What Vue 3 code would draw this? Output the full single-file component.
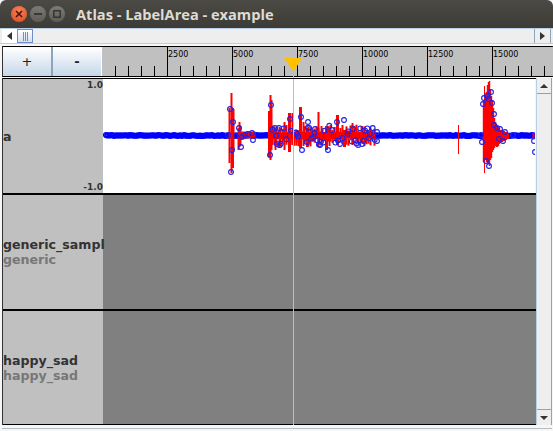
<template>
  <div class="window">
    <header class="titlebar">
      <div class="win-buttons">
        <span class="win-btn close">
          <svg width="8" height="8" viewBox="0 0 8 8"><path d="M1 1L7 7M7 1L1 7" stroke="#4a1206" stroke-width="1.6" /></svg>
        </span>
        <span class="win-btn">
          <svg width="8" height="8" viewBox="0 0 8 8"><path d="M0 4H8" stroke="#2e2d29" stroke-width="1.6" /></svg>
        </span>
        <span class="win-btn">
          <svg width="8" height="8" viewBox="0 0 8 8"><rect x="0.8" y="0.8" width="6.4" height="6.4" fill="none" stroke="#2e2d29" stroke-width="1.3" /></svg>
        </span>
      </div>
      <span class="title">Atlas - LabelArea - example</span>
    </header>

    <div class="hscroll">
      <button class="arrow-btn left"><span class="tri-left"></span></button>
      <div class="thumb"><i></i><i></i><i></i></div>
      <div class="htrack"></div>
      <button class="arrow-btn right"><span class="tri-right"></span></button>
    </div>

    <div class="toolbar">
      <button class="zoom-btn plus">+</button>
      <button class="zoom-btn minus">-</button>
      <div class="ruler">
        <div class="labels">
          <span v-for="m in marks" :key="m" class="mark">{{ m }}</span>
        </div>
        <svg class="ticks" width="449" height="29" viewBox="0 0 449 29">
          <line v-for="t in ticks" :key="t.x" :x1="t.x + 0.5" :x2="t.x + 0.5" :y1="t.major ? 0 : 19" y2="29" stroke="#000" />
        </svg>
        <svg class="marker" width="18" height="20" viewBox="0 0 18 20">
          <path d="M0 0H18L10 13V20H9V13Z" fill="#ffc000" />
        </svg>
      </div>
    </div>

    <div class="body">
      <div class="tracks">
        <section class="track">
          <div class="side">
            <span class="scale top">1.0</span>
            <span class="name">a</span>
            <span class="scale bottom">-1.0</span>
          </div>
          <svg class="wave" width="432" height="114" viewBox="103 79 432 114">
            <circle v-for="c in bandDots" :key="'b' + c.x" :cx="c.x" :cy="c.y" r="2.2" fill="none" stroke="#0000ff" stroke-width="1.8" />
            <line v-for="(s, i) in spikes" :key="'s' + i" :x1="s[0] + 0.5" :x2="s[0] + 0.5" :y1="s[1]" :y2="s[2]" stroke="#ff0000" :stroke-width="s[3] || 1.4" />
            <circle v-for="(c, i) in peaks" :key="'p' + i" :cx="c[0]" :cy="c[1]" r="2.4" fill="none" stroke="#2020e8" stroke-width="1.1" />
          </svg>
        </section>
        <section class="track">
          <div class="side">
            <span class="name">generic_sampl</span>
            <span class="kind">generic</span>
          </div>
          <div class="empty"></div>
        </section>
        <section class="track last">
          <div class="side">
            <span class="name">happy_sad</span>
            <span class="kind">happy_sad</span>
          </div>
          <div class="empty"></div>
        </section>
        <div class="playhead"></div>
      </div>

      <div class="vscroll">
        <button class="arrow-btn up"><span class="tri-up"></span></button>
        <div class="vtrack"></div>
        <button class="arrow-btn down"><span class="tri-down"></span></button>
      </div>
    </div>
    <div class="bottom-line"></div>
  </div>
</template>

<script setup>
const marks = [2500, 5000, 7500, 10000, 12500, 15000]

// ruler starts at x=102, 13px per minor tick, every 5th is a major one
const ticks = []
for (let i = 1; i * 13 < 449; i++) {
  ticks.push({ x: i * 13, major: i % 5 === 0 })
}

// small seeded random so the wave is the same on every load
let seed = 11
function rnd() {
  seed = (seed * 16807) % 2147483647
  return seed / 2147483647
}

const mid = 135.5

const bandDots = []
for (let x = 106; x < 535; x += 2) {
  bandDots.push({ x, y: mid + (rnd() - 0.5) * 0.8 })
}

// [x, top, bottom, width] read off the reference
const spikes = [
  [229, 108, 163, 2], [231, 93, 173, 2], [232, 108, 168, 3], [233, 109, 150, 2],
  [238, 128, 150, 2], [239, 122, 147, 2], [240, 126, 146, 2],
  [269, 111, 157, 3], [270, 95, 160, 2], [271, 100, 150, 2],
  [275, 128, 150, 2], [279, 127, 148, 2], [284, 122, 150, 2], [289, 113, 152, 3],
  [292, 113, 145, 2], [296, 130, 142, 2], [300, 107, 148, 3], [303, 122, 146, 2],
  [307, 128, 147, 3], [311, 128, 141, 2], [318, 112, 147, 2], [321, 126, 145, 2],
  [326, 126, 150, 3], [329, 130, 146, 2], [337, 115, 145, 3], [340, 128, 142, 2],
  [344, 130, 147, 3], [352, 123, 145, 2], [356, 129, 141, 2], [361, 126, 143, 2],
  [366, 130, 141, 2], [372, 131, 140, 2],
  [458, 125, 154, 1], [484, 86, 173, 1], [533, 133, 139, 2]
]

// big burst near 14500, fading out to the right
const burst = [
  [483, 100, 162], [485, 95, 160], [486, 92, 162], [487, 85, 163], [488, 82, 164],
  [489, 81, 166], [490, 90, 160], [491, 96, 158], [492, 100, 152], [493, 108, 150],
  [494, 118, 148], [495, 122, 146], [496, 124, 147], [497, 126, 147], [498, 128, 146],
  [499, 128, 144], [500, 130, 143], [501, 130, 142], [502, 130, 142], [503, 131, 141],
  [504, 131, 141], [505, 132, 140], [506, 132, 140], [507, 133, 139], [508, 133, 139]
]
spikes.push(...burst)

const peaks = [
  [230, 109], [233, 122], [239, 128], [241, 147], [232, 150], [231, 172], [228, 135], [236, 136],
  [271, 105], [270, 155], [275, 128], [279, 128], [277, 144], [290, 119], [301, 117],
  [302, 150], [308, 122], [307, 142], [315, 129], [320, 145], [337, 122], [344, 120],
  [328, 150], [332, 130], [340, 144], [353, 129], [362, 144], [377, 132], [377, 141],
  [252, 133], [253, 140], [245, 135], [242, 137], [248, 134],
  [491, 92], [487, 96], [489, 99], [484, 98], [483, 104], [492, 103], [494, 114], [494, 125],
  [497, 128], [500, 129], [505, 132], [513, 135], [503, 141], [499, 139], [481, 135], [482, 142],
  [486, 161], [489, 166], [534, 141], [535, 152]
]

// dense middle section: short strokes and rings around the centre line
for (let x = 272; x < 376; x += 2) {
  spikes.push([x, mid - 3 - rnd() * 8, mid + 3 + rnd() * 8, 2])
  if (rnd() > 0.25) peaks.push([x + rnd() * 2, mid + (rnd() - 0.5) * 20])
}
for (let x = 242; x < 256; x += 2) {
  spikes.push([x, mid - 4, mid + 3, 2])
}
</script>

<style>
html,
body {
  margin: 0;
  background: #ffffff;
}
</style>

<style scoped>
.window {
  width: 553px;
  height: 431px;
  display: flex;
  flex-direction: column;
  background: #f6f6f6;
  overflow: hidden;
  font-family: "DejaVu Sans", sans-serif;
}
.titlebar {
  height: 28px;
  flex: none;
  display: flex;
  align-items: center;
  background: linear-gradient(#4b4a45, #3c3b37);
  border-radius: 6px 6px 0 0;
}
.win-buttons {
  display: flex;
  gap: 3px;
  margin-left: 11px;
}
.win-btn {
  width: 16px;
  height: 16px;
  border-radius: 50%;
  background: linear-gradient(#7d7c74, #5c5b55);
  display: flex;
  align-items: center;
  justify-content: center;
}
.win-btn.close {
  background: radial-gradient(circle at 50% 30%, #f5805a, #dc4a1c);
}
.title {
  margin-left: 11px;
  font-family: "Open Sans", sans-serif;
  font-weight: 700;
  font-size: 14.6px;
  color: #dfdbd2;
}
.hscroll {
  height: 16px;
  flex: none;
  box-sizing: border-box;
  display: flex;
  margin-bottom: 2px;
  padding: 0 2px;
  background: #eeeeee;
  border-top: 1px solid #b8cfe5;
  border-bottom: 1px solid #b8cfe5;
}
.arrow-btn {
  flex: none;
  width: 15px;
  padding: 0;
  border: 0;
  background: #eeeeee;
  display: flex;
  align-items: center;
  justify-content: center;
}
.hscroll .left {
  background: #ffffff;
}
.tri-left,
.tri-right,
.tri-up,
.tri-down {
  width: 0;
  height: 0;
  display: block;
  border-style: solid;
  border-color: transparent;
}
.tri-left {
  border-width: 4px 5px 4px 0;
  border-right-color: #333333;
}
.tri-right {
  border-width: 4px 0 4px 5px;
  border-left-color: #333333;
}
.tri-up {
  border-width: 0 4px 4px;
  border-bottom-color: #333333;
}
.tri-down {
  border-width: 4px 4px 0;
  border-top-color: #333333;
}
.hscroll .right {
  border-left: 1px solid #8da5bb;
  border-right: 1px solid #8da5bb;
  box-sizing: content-box;
}
.thumb {
  width: 16px;
  flex: none;
  box-sizing: border-box;
  border: 1px solid #6d8fc9;
  background: linear-gradient(#ffffff, #d3e0ee);
  display: flex;
  align-items: center;
  justify-content: center;
  gap: 1px;
}
.thumb i {
  width: 1px;
  height: 9px;
  background: #6d8fc9;
}
.htrack {
  flex: 1;
}
.toolbar {
  height: 31px;
  flex: none;
  display: flex;
  box-sizing: border-box;
  margin: 0 0 1px 2px;
  border-top: 1px solid #000000;
  border-bottom: 1px solid #000000;
  border-left: 1px solid #333333;
  border-right: 1px solid #333333;
}
.zoom-btn {
  flex: none;
  padding: 0;
  border: 0;
  background: linear-gradient(#ffffff, #c5d7ea);
  font-family: "DejaVu Sans", sans-serif;
  font-size: 13px;
  color: #222222;
}
.plus {
  width: 50px;
  border-right: 2px solid #8da5bb;
}
.minus {
  width: 48px;
  font-weight: 700;
}
.ruler {
  position: relative;
  flex: 1;
  display: flex;
  background: #c0c0c0;
  border-left: 1px solid #ffffff;
}
.labels {
  display: flex;
  padding-left: 65px;
  height: 100%;
}
.mark {
  width: 65px;
  font-size: 8px;
  line-height: 10px;
  margin-top: 3px;
  padding-left: 1px;
  box-sizing: border-box;
  color: #000000;
}
.ticks {
  position: absolute;
  left: 0;
  top: 0;
}
.marker {
  position: absolute;
  left: 182px;
  top: 11px;
}
.body {
  flex: 1;
  display: flex;
  min-height: 0;
  margin-bottom: 3px;
  padding-right: 1px;
}
.tracks {
  position: relative;
  flex: 1;
  display: flex;
  flex-direction: column;
  border-top: 1px solid #000000;
  border-left: 1px solid #333333;
  margin-left: 2px;
}
.track {
  height: 114px;
  flex: none;
  display: flex;
  border-bottom: 2px solid #000000;
}
.track.last {
  height: 113px;
  border-bottom: 1px solid #000000;
}
.side {
  position: relative;
  width: 100px;
  flex: none;
  background: #c0c0c0;
  display: flex;
  flex-direction: column;
  justify-content: center;
  box-sizing: border-box;
  font-size: 12.6px;
  line-height: 15px;
  font-weight: 700;
  color: #333333;
}
.name {
  white-space: nowrap;
}
.kind {
  white-space: nowrap;
  color: #777777;
}
.scale {
  position: absolute;
  right: 0;
  font-size: 9px;
  line-height: 10px;
}
.scale.top {
  top: 1px;
}
.scale.bottom {
  bottom: 1px;
}
.wave {
  flex: none;
  background: #ffffff;
}
.empty {
  flex: 1;
  background: #808080;
}
.playhead {
  position: absolute;
  left: 290px;
  top: 0;
  bottom: 0;
  width: 1px;
  background: #ffc000;
}
.vscroll {
  width: 16px;
  flex: none;
  display: flex;
  flex-direction: column;
  border-left: 1px solid #b8cfe5;
  border-right: 1px solid #8da5bb;
  box-sizing: border-box;
  background: #eeeeee;
}
.vscroll .arrow-btn {
  width: 100%;
  height: 16px;
}
.vscroll .up {
  border-bottom: 1px solid #8da5bb;
}
.vscroll .down {
  border-top: 1px solid #8da5bb;
}
.vtrack {
  flex: 1;
}
.bottom-line {
  height: 1px;
  flex: none;
  margin: 0 1px 2px 2px;
  background: #b4bcc4;
}
</style>
